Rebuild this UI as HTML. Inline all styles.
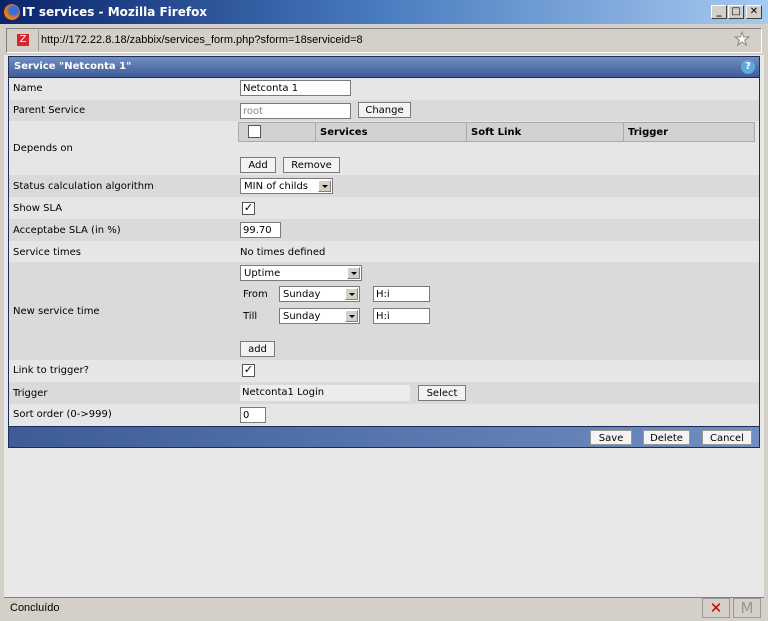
<!DOCTYPE html>
<html><head><meta charset="utf-8"><style>
*{margin:0;padding:0;box-sizing:border-box}
body{width:768px;height:621px;position:relative;overflow:hidden;background:#d4d0c8;font-family:"DejaVu Sans","Liberation Sans",sans-serif;font-size:10px;color:#000}
.a{position:absolute}
.title{left:0;top:0;width:768px;height:24px;background:linear-gradient(90deg,#0a246a,#4a7cc0 50%,#a6caf0);color:#fff;font-weight:bold;font-size:12px;line-height:24px;padding-left:22px}
.wb{top:5px;width:16px;height:14px;background:#d4d0c8;border:1px solid;border-color:#fff #404040 #404040 #fff;font-size:10px;line-height:12px;text-align:center;color:#000;font-weight:bold}
.addr{left:6px;top:28px;width:756px;height:25px;background:#d4d0c8;border:1px solid;border-color:#808080 #fff #fff #808080;font-size:11px;line-height:23px;padding-left:34px;font-family:"Liberation Sans",sans-serif}
.page{left:4px;top:55px;width:760px;height:542px;background:#e8e8e8}
.hdr{left:8px;top:56px;width:752px;height:22px;background:linear-gradient(#6f8fc2,#3d5c98);border:1px solid #1c2d5a;color:#fff;font-weight:bold;line-height:20px;padding-left:5px}
.row{left:8px;width:752px;border-left:1px solid #1c2d5a;border-right:1px solid #1c2d5a}
.l{background:#e6e6e6}.d{background:#dadada}
.lbl{left:13px}
.in{background:#fff;border:1px solid #7a7a7a;height:16px;padding:1px 0 0 2px;line-height:14px}
.btn{background:#f2f2f2;border:1px solid #7a7a7a;height:16px;text-align:center;line-height:14px;padding-top:1px}
.sel{background:#fff;border:1px solid #7a7a7a;height:16px;padding:1px 0 0 3px;line-height:14px}
.sel i{position:absolute;right:1px;top:1px;width:13px;height:12px;background:#d4d0c8;border:1px solid;border-color:#fff #808080 #808080 #fff}
.sel i:after{content:"";position:absolute;left:3px;top:4px;border:3px solid transparent;border-top:3px solid #000}
.cb{width:13px;height:13px;background:#fff;border:1px solid #555;font-size:11px;line-height:10px;text-align:center;font-weight:bold}
.foot{left:8px;top:426px;width:752px;height:22px;background:linear-gradient(90deg,#3d5c98,#6f8fc2);border:1px solid #1c2d5a}
.fb{top:430px;height:15px;background:#f4f4f4;border:1px solid #999;text-align:center;line-height:13px;padding-top:1px}
.status{left:4px;top:597px;width:760px;height:21px;border-top:1px solid #808080;background:#d4d0c8;font-size:11px;line-height:20px;padding-left:6px;font-family:"Liberation Sans",sans-serif}
</style></head><body>
<div class="a title">IT services - Mozilla Firefox</div>
<div class="a" style="left:4px;top:4px;width:16px;height:16px;border-radius:50%;background:radial-gradient(circle at 60% 40%,#3c6ed4 30%,#f07a10 55%)"></div>
<div class="a wb" style="left:711px">_</div><div class="a wb" style="left:728px">□</div><div class="a wb" style="left:746px">✕</div>
<div class="a addr">http://172.22.8.18/zabbix/services_form.php?sform=18serviceid=8</div>
<div class="a" style="left:9px;top:30px;width:30px;height:21px;border-right:1px solid #999"></div>
<div class="a" style="left:17px;top:34px;width:12px;height:12px;background:#d8262e;color:#fff;font-size:10px;line-height:12px;text-align:center">Z</div>
<div class="a" style="left:734px;top:29px;font-size:18px;color:#fff;-webkit-text-stroke:1px #888">★</div>
<div class="a page"></div>
<div class="a hdr">Service "Netconta 1"</div>
<div class="a" style="left:741px;top:60px;width:14px;height:14px;border-radius:50%;background:#5fa8d8;color:#fff;font-size:10px;font-weight:bold;text-align:center;line-height:14px">?</div>

<div class="a row l" style="top:78px;height:22px"></div>
<div class="a row d" style="top:100px;height:21px"></div>
<div class="a row l" style="top:121px;height:54px"></div>
<div class="a row d" style="top:175px;height:22px"></div>
<div class="a row l" style="top:197px;height:22px"></div>
<div class="a row d" style="top:219px;height:22px"></div>
<div class="a row l" style="top:241px;height:21px"></div>
<div class="a row d" style="top:262px;height:98px"></div>
<div class="a row l" style="top:360px;height:22px"></div>
<div class="a row d" style="top:382px;height:22px"></div>
<div class="a row l" style="top:404px;height:22px"></div>

<div class="a lbl" style="top:83px">Name</div>
<div class="a lbl" style="top:105px">Parent Service</div>
<div class="a lbl" style="top:143px">Depends on</div>
<div class="a lbl" style="top:181px">Status calculation algorithm</div>
<div class="a lbl" style="top:203px">Show SLA</div>
<div class="a lbl" style="top:225px">Acceptabe SLA (in %)</div>
<div class="a lbl" style="top:247px">Service times</div>
<div class="a lbl" style="top:306px">New service time</div>
<div class="a lbl" style="top:365px">Link to trigger?</div>
<div class="a lbl" style="top:388px">Trigger</div>
<div class="a lbl" style="top:409px">Sort order (0-&gt;999)</div>

<div class="a in" style="left:240px;top:80px;width:111px">Netconta 1</div>
<div class="a in" style="left:240px;top:103px;width:111px;color:#888">root</div>
<div class="a btn" style="left:358px;top:102px;width:53px">Change</div>
<div class="a" style="left:238px;top:122px;width:517px;height:20px;background:#d2d2d2;border:1px solid #aaa;font-weight:bold"></div>
<div class="a" style="left:315px;top:123px;width:1px;height:18px;background:#aaa"></div>
<div class="a" style="left:466px;top:123px;width:1px;height:18px;background:#aaa"></div>
<div class="a" style="left:623px;top:123px;width:1px;height:18px;background:#aaa"></div>
<div class="a cb" style="left:248px;top:125px"></div>
<div class="a" style="left:320px;top:127px;font-weight:bold">Services</div>
<div class="a" style="left:471px;top:127px;font-weight:bold">Soft Link</div>
<div class="a" style="left:628px;top:127px;font-weight:bold">Trigger</div>
<div class="a btn" style="left:240px;top:157px;width:36px">Add</div>
<div class="a btn" style="left:283px;top:157px;width:57px">Remove</div>
<div class="a sel" style="left:240px;top:178px;width:93px">MIN of childs<i></i></div>
<div class="a cb" style="left:242px;top:202px">✓</div>
<div class="a in" style="left:240px;top:222px;width:41px">99.70</div>
<div class="a" style="left:240px;top:247px">No times defined</div>
<div class="a sel" style="left:240px;top:265px;width:122px">Uptime<i></i></div>
<div class="a" style="left:243px;top:289px">From</div>
<div class="a sel" style="left:279px;top:286px;width:81px">Sunday<i></i></div>
<div class="a in" style="left:373px;top:286px;width:57px">H:i</div>
<div class="a" style="left:243px;top:311px">Till</div>
<div class="a sel" style="left:279px;top:308px;width:81px">Sunday<i></i></div>
<div class="a in" style="left:373px;top:308px;width:57px">H:i</div>
<div class="a btn" style="left:240px;top:341px;width:35px">add</div>
<div class="a cb" style="left:242px;top:364px">✓</div>
<div class="a" style="left:240px;top:385px;width:170px;height:16px;background:#ececec;padding-left:2px;line-height:16px">Netconta1 Login</div>
<div class="a btn" style="left:418px;top:385px;width:48px">Select</div>
<div class="a in" style="left:240px;top:407px;width:26px">0</div>

<div class="a foot"></div>
<div class="a fb" style="left:590px;width:42px">Save</div>
<div class="a fb" style="left:643px;width:47px">Delete</div>
<div class="a fb" style="left:702px;width:50px">Cancel</div>

<div class="a status">Concluído</div>
<div class="a" style="left:702px;top:598px;width:28px;height:20px;border:1px solid #999;color:#c00;font-weight:bold;font-size:15px;text-align:center;line-height:18px">✕</div>
<div class="a" style="left:733px;top:598px;width:28px;height:20px;border:1px solid #999;color:#999;font-size:15px;text-align:center;line-height:18px">M</div>
</body></html>
